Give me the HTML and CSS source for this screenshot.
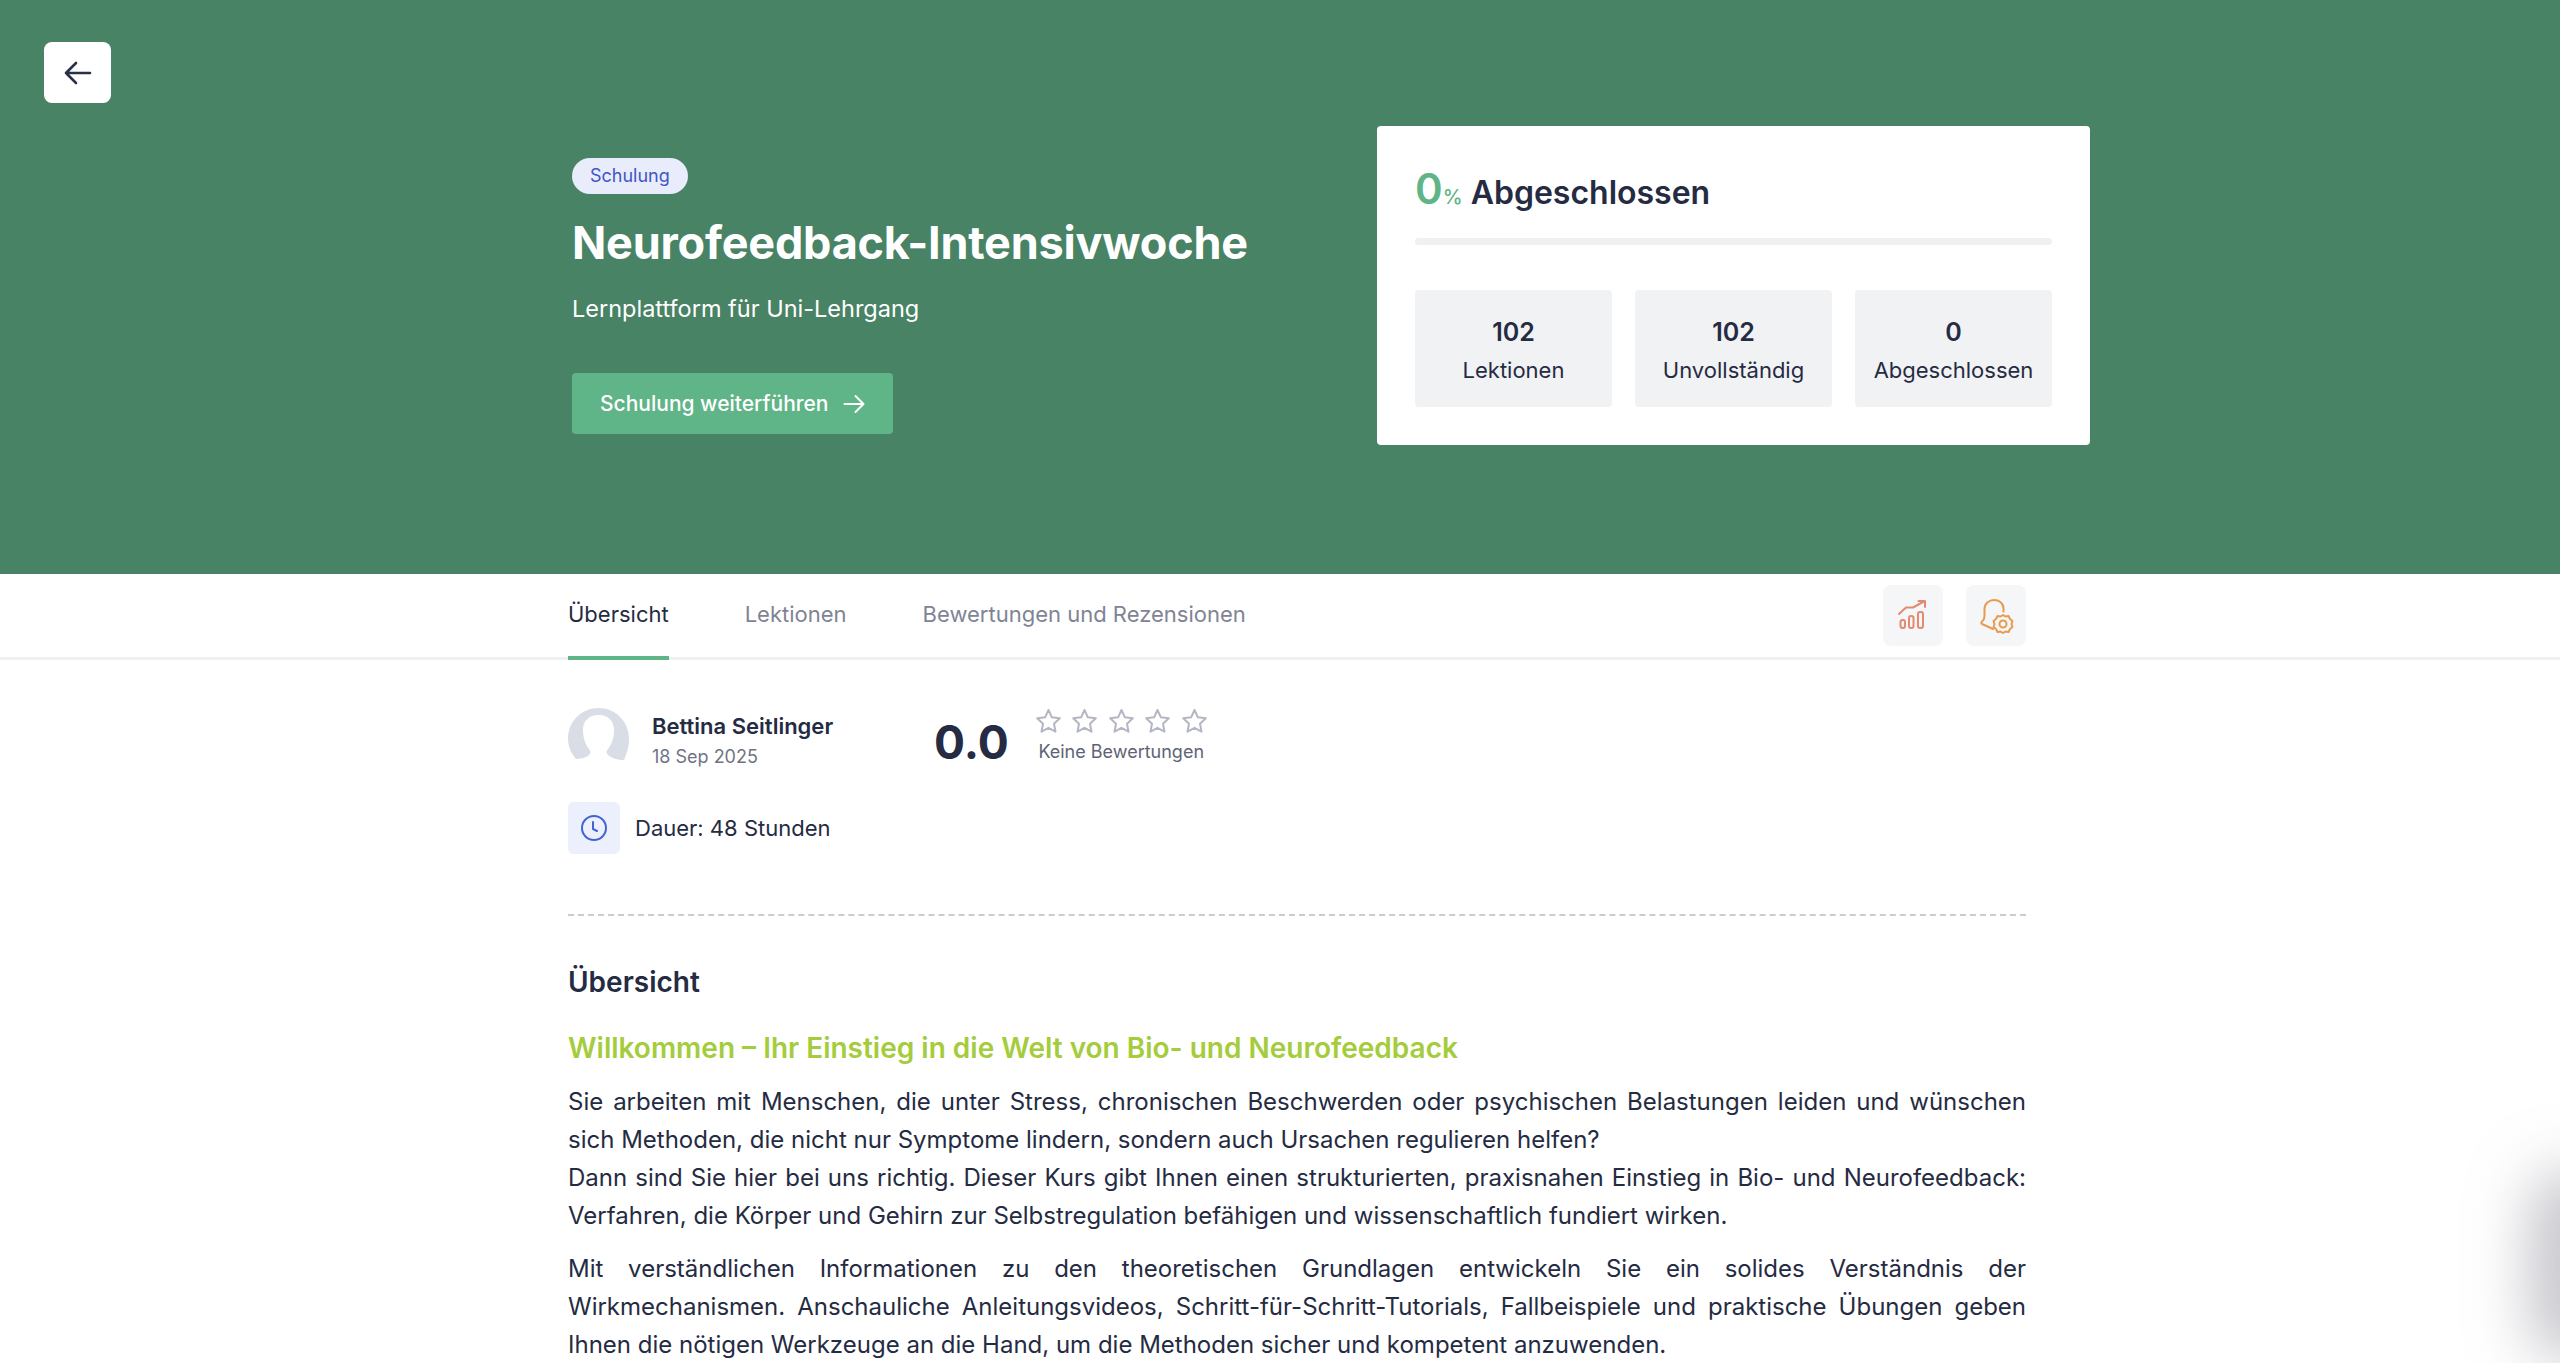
FILE: index.html
```html
<!DOCTYPE html>
<html lang="en">
<head>
  <meta charset="UTF-8">
  <title>Neurofeedback-Intensivwoche</title>
  <link rel="stylesheet" href="styles.css">
</head>
<body>
  <header class="hero">
    <a class="back-btn" href="#">
      <svg width="30" height="30" viewBox="0 0 30 30" fill="none" stroke="#2a2f4a" stroke-width="2.6" stroke-linecap="round" stroke-linejoin="round"><path d="M27 15H3M13 5 3 15l10 10"/></svg>
    </a>
    <div class="hero-info">
      <span class="badge">Schulung</span>
      <h1>Neurofeedback-Intensivwoche</h1>
      <p class="subtitle">Lernplattform für Uni-Lehrgang</p>
      <a class="continue-btn" href="#">Schulung weiterführen
        <svg width="22" height="20" viewBox="0 0 22 20" fill="none" stroke="#fff" stroke-width="2" stroke-linecap="round" stroke-linejoin="round"><path d="M1.500 10h19M12.500 2l8 8-8 8"/></svg>
      </a>
    </div>
    <div class="progress-card">
      <div class="progress-title"><span class="pct">0</span><span class="pct-sign">%</span> Abgeschlossen</div>
      <div class="progress-track"></div>
      <div class="stats">
        <div class="stat"><strong>102</strong><span>Lektionen</span></div>
        <div class="stat"><strong>102</strong><span>Unvollständig</span></div>
        <div class="stat"><strong>0</strong><span>Abgeschlossen</span></div>
      </div>
    </div>
  </header>

  <nav class="tabbar">
    <div class="tabbar-inner">
      <a class="tab active" href="#">Übersicht</a>
      <a class="tab" href="#">Lektionen</a>
      <a class="tab" href="#">Bewertungen und Rezensionen</a>
      <div class="tab-actions">
        <button class="icon-btn">
          <svg width="32" height="32" viewBox="0 0 32 32" fill="none" stroke="#e58a72" stroke-width="2" stroke-linecap="round" stroke-linejoin="round">
            <path d="M2 14 9 7.500h7l10-5.500M21.500 1H28v6"/>
            <rect x="3.500" y="20" width="4.500" height="8" rx="2"/>
            <rect x="12" y="16" width="4.500" height="12" rx="2"/>
            <rect x="21" y="12" width="5" height="16" rx="2"/>
          </svg>
        </button>
        <button class="icon-btn">
          <svg width="38" height="38" viewBox="0 0 38 38" fill="none" stroke="#e89a50" stroke-width="2" stroke-linecap="round" stroke-linejoin="round">
            <path d="M16 32 5 27c-1-.6-1-1.700 0-2.500 1.500-1.200 2.500-3 2.500-5.500v-7C7.500 6.500 12 3 17 3s9.500 3 9.500 8.500v3"/>
            <path d="M26 18l2.500 1.500 3-.5 1.500 3 2.500 2-1 3 1 3-2.500 2-1.500 3-3-.5L26 36l-2.500-1.500-3 .5-1.500-3-2.500-2 1-3-1-3 2.500-2 1.500-3 3 .5z"/>
            <circle cx="26" cy="27" r="3.500"/>
          </svg>
        </button>
      </div>
    </div>
  </nav>

  <main class="content">
    <div class="meta-row">
      <div class="author">
        <svg class="avatar" width="61" height="52" viewBox="0 0 61 52">
          <path fill="#d9dee6" d="M30.500 0C47 0 61 13 61 31c0 7-2 14-5 21-6 0-13-2-16-5-2-2-2-4 0-6 4-5 6-12 6-19 0-9-6-15-15.500-15S15 13 15 22c0 7 2 14 6 19 2 2 2 4 0 6-3 3-10 4-13 4-5-6-8-13-8-20C0 13 14 0 30.500 0z"/>
        </svg>
        <div class="author-text">
          <div class="author-name">Bettina Seitlinger</div>
          <div class="author-date">18 Sep 2025</div>
        </div>
      </div>
      <div class="rating">
        <div class="rating-num">0.0</div>
        <div class="rating-side">
          <div class="stars">
            <svg width="27" height="26" viewBox="0 0 27 26"><path class="star" d="M13.500 2l3.400 7.300 7.900 1-5.800 5.500 1.500 7.900-7-3.900-7 3.900 1.500-7.900-5.800-5.500 7.900-1z"/></svg>
            <svg width="27" height="26" viewBox="0 0 27 26"><path class="star" d="M13.500 2l3.400 7.300 7.900 1-5.800 5.500 1.500 7.900-7-3.900-7 3.900 1.500-7.900-5.800-5.500 7.900-1z"/></svg>
            <svg width="27" height="26" viewBox="0 0 27 26"><path class="star" d="M13.500 2l3.400 7.300 7.900 1-5.800 5.500 1.500 7.900-7-3.900-7 3.900 1.500-7.900-5.800-5.500 7.900-1z"/></svg>
            <svg width="27" height="26" viewBox="0 0 27 26"><path class="star" d="M13.500 2l3.400 7.300 7.900 1-5.800 5.500 1.500 7.900-7-3.900-7 3.900 1.500-7.900-5.800-5.500 7.900-1z"/></svg>
            <svg width="27" height="26" viewBox="0 0 27 26"><path class="star" d="M13.500 2l3.400 7.300 7.900 1-5.800 5.500 1.500 7.900-7-3.900-7 3.900 1.500-7.900-5.800-5.500 7.900-1z"/></svg>
          </div>
          <div class="rating-label">Keine Bewertungen</div>
        </div>
      </div>
    </div>

    <div class="duration">
      <span class="clock-box">
        <svg width="28" height="28" viewBox="0 0 28 28" fill="none" stroke="#4163d6" stroke-width="2" stroke-linecap="round" stroke-linejoin="round"><circle cx="14" cy="14" r="12"/><path d="M13 8v7l4 2"/></svg>
      </span>
      Dauer: 48 Stunden
    </div>

    <hr class="divider">

    <h2>Übersicht</h2>
    <h3>Willkommen – Ihr Einstieg in die Welt von Bio- und Neurofeedback</h3>
    <p>Sie arbeiten mit Menschen, die unter Stress, chronischen Beschwerden oder psychischen Belastungen leiden und wünschen sich Methoden, die nicht nur Symptome lindern, sondern auch Ursachen regulieren helfen?<br>Dann sind Sie hier bei uns richtig. Dieser Kurs gibt Ihnen einen strukturierten, praxisnahen Einstieg in Bio- und Neurofeedback: Verfahren, die Körper und Gehirn zur Selbstregulation befähigen und wissenschaftlich fundiert wirken.</p>
    <p>Mit verständlichen Informationen zu den theoretischen Grundlagen entwickeln Sie ein solides Verständnis der Wirkmechanismen. Anschauliche Anleitungsvideos, Schritt-für-Schritt-Tutorials, Fallbeispiele und praktische Übungen geben Ihnen die nötigen Werkzeuge an die Hand, um die Methoden sicher und kompetent anzuwenden.</p>
  </main>

  <div class="edge-shadow"></div>
</body>
</html>
```

FILE: styles.css
```css
* {
  box-sizing: border-box;
}

html, body {
  height: 100%;
}

body {
  margin: 0;
  overflow: hidden;
  font-family: Inter, "Noto Sans", sans-serif;
  color: #252b42;
  background: #fff;
}

a {
  text-decoration: none;
}

/* hero */
.hero {
  position: relative;
  display: flex;
  height: 574px;
  padding: 126px 0 0 572px;
  background: #488365;
}

.back-btn {
  position: absolute;
  left: 44px;
  top: 42px;
  width: 67px;
  height: 61px;
  display: flex;
  align-items: center;
  justify-content: center;
  background: #fff;
  border-radius: 8px;
}

.hero-info {
  width: 805px;
  padding-top: 32px;
}

.badge {
  display: inline-block;
  height: 36px;
  padding: 0 18px;
  line-height: 36px;
  font-size: 18px;
  color: #3f56c4;
  background: #e8ecfb;
  border-radius: 18px;
}

h1 {
  margin: 18px 0 0;
  font-size: 45px;
  line-height: 62px;
  font-weight: 700;
  color: #fff;
  letter-spacing: -0.2px;
}

.subtitle {
  margin: 18px 0 0;
  font-size: 23.500px;
  line-height: 34px;
  color: #fff;
}

.continue-btn {
  display: inline-flex;
  align-items: center;
  gap: 14px;
  height: 61px;
  margin-top: 47px;
  padding: 0 28px;
  font-size: 21px;
  font-weight: 500;
  color: #fff;
  background: #5fb587;
  border-radius: 4px;
}

/* progress card */
.progress-card {
  width: 713px;
  height: 319px;
  padding: 38px 38px 0;
  background: #fff;
  border-radius: 4px;
}

.progress-title {
  display: flex;
  align-items: baseline;
  height: 50px;
  font-size: 32px;
  font-weight: 600;
  line-height: 50px;
  white-space: pre;
}

.pct {
  font-size: 42px;
  color: #5fb587;
}

.pct-sign {
  font-size: 20px;
  font-weight: 500;
  color: #5fb587;
}

.progress-track {
  height: 7px;
  margin-top: 24px;
  background: #eff0f2;
  border-radius: 4px;
}

.stats {
  display: grid;
  grid-template-columns: repeat(3, 1fr);
  gap: 23px;
  margin-top: 45px;
}

.stat {
  display: flex;
  flex-direction: column;
  align-items: center;
  height: 117px;
  padding-top: 24px;
  background: #f1f2f4;
  border-radius: 4px;
}

.stat strong {
  font-size: 25px;
  font-weight: 600;
  line-height: 36px;
}

.stat span {
  margin-top: 2px;
  font-size: 22px;
  line-height: 36px;
}

/* tabs */
.tabbar {
  height: 86px;
  border-bottom: 3px solid #eff0f2;
}

.tabbar-inner {
  display: flex;
  align-items: stretch;
  gap: 76px;
  width: 1458px;
  height: 86px;
  margin-left: 568px;
}

.tab {
  display: flex;
  align-items: center;
  height: 86px;
  padding-bottom: 2px;
  font-size: 22px;
  color: #7f8494;
  border-bottom: 4px solid transparent;
}

.tab.active {
  color: #252b42;
  border-bottom-color: #5fb587;
}

.tab-actions {
  display: flex;
  gap: 23px;
  margin-left: auto;
  padding-top: 11px;
}

.icon-btn {
  display: flex;
  align-items: center;
  justify-content: center;
  width: 60px;
  height: 61px;
  padding: 0;
  border: none;
  border-radius: 8px;
  background: #f5f6f8;
}

/* content */
.content {
  width: 1458px;
  margin-left: 568px;
}

.meta-row {
  display: flex;
  margin-top: 48px;
  height: 62px;
}

.author {
  display: flex;
  gap: 23px;
  width: 366px;
}

.author-name {
  margin-top: 2px;
  font-size: 22px;
  font-weight: 600;
  line-height: 32px;
}

.author-date {
  margin-top: 2px;
  font-size: 18px;
  line-height: 26px;
  color: #6f7485;
}

.rating {
  display: flex;
  gap: 26px;
}

.rating-num {
  font-size: 46px;
  font-weight: 700;
  line-height: 60px;
  margin-top: 4px;
}

.rating-side {
  display: flex;
  flex-direction: column;
  align-items: center;
}

.stars {
  display: flex;
  gap: 9.500px;
}

.star {
  fill: none;
  stroke: #b4b7c3;
  stroke-width: 2;
  stroke-linejoin: round;
}

.rating-label {
  margin-top: 4px;
  font-size: 18px;
  line-height: 28px;
  color: #5e6375;
}

.duration {
  display: flex;
  align-items: center;
  gap: 15px;
  margin-top: 32px;
  font-size: 22px;
}

.clock-box {
  display: flex;
  align-items: center;
  justify-content: center;
  width: 52px;
  height: 52px;
  background: #eceffc;
  border-radius: 6px;
}

.divider {
  margin: 60px 0 0;
  border: none;
  border-top: 2px dashed #c9ccd2;
}

h2 {
  margin: 46px 0 0;
  font-size: 28px;
  line-height: 40px;
  font-weight: 600;
}

h3 {
  margin: 26px 0 0;
  font-size: 28px;
  line-height: 40px;
  font-weight: 600;
  color: #a4cc3c;
}

p {
  margin: 15px 0 0;
  font-size: 24px;
  line-height: 38px;
  text-align: justify;
}

/* blurred shape at the window edge */
.edge-shadow {
  position: fixed;
  right: -30px;
  top: 1200px;
  width: 30px;
  height: 130px;
  background: #9a9aa4;
  box-shadow: 0 0 60px 30px rgba(150, 150, 160, 0.55);
  border-radius: 15px;
}
```
